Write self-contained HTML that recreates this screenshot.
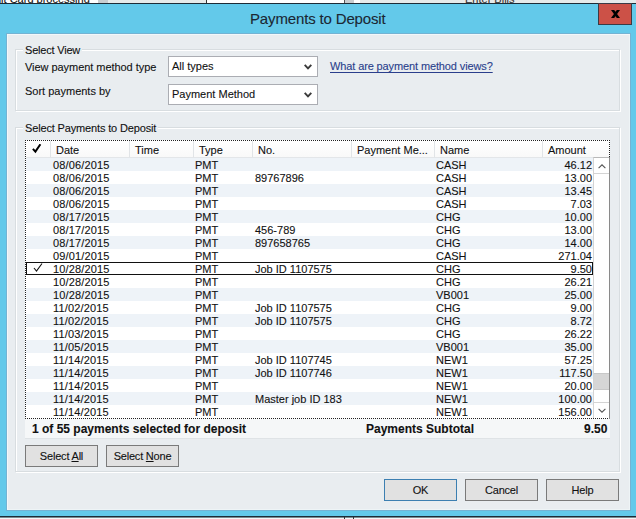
<!DOCTYPE html>
<html><head><meta charset="utf-8">
<style>
*{box-sizing:border-box;margin:0;padding:0}
html,body{width:636px;height:519px;overflow:hidden;-webkit-font-smoothing:antialiased;background:#63c9ea;font-family:"Liberation Sans",sans-serif;font-size:11px;color:#111;-webkit-text-stroke:0.1px currentColor}
.a{position:absolute;white-space:nowrap}
#top{left:0;top:0;width:636px;height:4px;background:#fff;overflow:hidden}
#topline{left:0;top:3px;width:636px;height:1px;background:#1d2b36}
#close{left:598px;top:3px;width:34px;height:22px;background:#cc5147;border:1px solid #3b3a44}
#title{left:250px;top:10px;font-size:15px;color:#1b2733;letter-spacing:-0.15px}
#client{left:6px;top:33px;width:625px;height:478px;background:#e9edf0;border:1px solid #74b3d3;box-shadow:inset 1px 1px 0 #f3f8fa,inset -1px -1px 0 #eef4f6}
#botline{left:0;top:516px;width:636px;height:1px;background:#1d2b36}
#bot{left:0;top:517px;width:636px;height:2px;background:#f4f6f6;border-top:1px solid #7a8a90}
.grp{border:1px solid #d8dde0;box-shadow:inset 1px 1px 0 #fff,1px 1px 0 #fff}
.lbl{background:#e9edf0;padding:0 2px}
.combo{background:#fff;border:1px solid #abadb3}
.chev{width:9px;height:6px}
.btn{background:#e1e1e1;border:1px solid #7a7a7a;text-align:center;line-height:21px;letter-spacing:-0.2px}
#grid{left:25px;top:140px;width:585px;height:279px;border:1px dotted #222;background:#fff;overflow:hidden}
.hdr{position:absolute;top:0;height:17px;line-height:14px;padding-top:2px;border-bottom:1px solid #e3e6e9;background:linear-gradient(#fff,#f9f9f9);border-right:1px solid #e1e4e7;padding-left:5px}
.row{position:absolute;left:0;width:567px;height:13px;line-height:13px}
.row.alt{background:#eef3f8}
.row span{position:absolute;top:1px}
.sel{position:absolute;left:0;top:0;width:567px;height:13px;border:1px solid #111}
#sb{position:absolute;left:567px;top:16px;width:17px;height:262px;background:#fff;border-left:1px solid #d4d4d4;border-top:1px solid #b8b8b8}
</style></head><body>
<div class="a" id="top">
  <div class="a" style="left:-5px;top:-7px;font-size:11px;color:#111">dit Card processing</div>
  <div class="a" style="left:98px;top:0;width:10px;height:3px;background:#c9cdd0"></div>
  <div class="a" style="left:108px;top:0;width:98px;height:3px;background:#e6eaea"></div>
  <div class="a" style="left:206px;top:0;width:1px;height:3px;background:#333"></div>
  <div class="a" style="left:344px;top:0;width:1px;height:3px;background:#555"></div>
  <div class="a" style="left:345px;top:0;width:9px;height:3px;background:#c9cdd0"></div>
  <div class="a" style="left:360px;top:0;width:276px;height:3px;background:#e6eaea"></div>
  <div class="a" style="left:465px;top:-7px;font-size:11px;color:#333">Enter Bills</div>
</div>
<div class="a" id="topline"></div>
<div class="a" id="close"><svg width="33" height="20" style="position:absolute;left:0;top:0"><path d="M12 6 L15.2 6 L21 14 L17.8 14 Z M17.8 6 L21 6 L15.2 14 L12 14 Z" fill="#000"/></svg></div>
<div class="a" id="title">Payments to Deposit</div>
<div class="a" id="client"></div>
<div class="a" id="botline"></div>
<div class="a" id="bot"></div>
<div class="a" style="left:344px;top:517px;width:1px;height:2px;background:#333"></div>
<div class="a" style="left:353px;top:517px;width:1px;height:2px;background:#333"></div>

<!-- group 1 -->
<div class="a grp" style="left:15px;top:49px;width:605px;height:62px"></div>
<div class="a lbl" style="left:23px;top:44px;letter-spacing:-0.2px">Select View</div>
<div class="a" style="left:25px;top:61px;letter-spacing:-0.05px">View payment method type</div>
<div class="a" style="left:25px;top:85px">Sort payments by</div>
<div class="a combo" style="left:168px;top:56px;width:150px;height:21px"></div>
<div class="a" style="left:172px;top:60px">All types</div>
<svg class="a" style="left:304px;top:64px" width="8" height="6" viewBox="0 0 8 6"><path d="M0.7 0.9 L4 4.4 L7.3 0.9" fill="none" stroke="#3a3a3a" stroke-width="1.9"/></svg>
<div class="a combo" style="left:168px;top:84px;width:150px;height:21px"></div>
<div class="a" style="left:172px;top:88px">Payment Method</div>
<svg class="a" style="left:304px;top:92px" width="8" height="6" viewBox="0 0 8 6"><path d="M0.7 0.9 L4 4.4 L7.3 0.9" fill="none" stroke="#3a3a3a" stroke-width="1.9"/></svg>
<div class="a" style="left:330px;top:60px;color:#2a3f8c;text-decoration:underline;text-underline-offset:2px;letter-spacing:-0.12px">What are payment method views?</div>

<!-- group 2 -->
<div class="a grp" style="left:15px;top:127px;width:605px;height:345px"></div>
<div class="a lbl" style="left:23px;top:122px;letter-spacing:-0.15px">Select Payments to Deposit</div>

<div class="a" id="grid">
  <div class="hdr" style="left:0;width:25px"></div>
  <svg class="a" style="left:6px;top:3px" width="10" height="10" viewBox="0 0 10 10"><path d="M0.9 4.9 L3.4 7.6 L8.4 0.3" fill="none" stroke="#000" stroke-width="2"/></svg>
  <div class="hdr" style="left:25px;width:79px">Date</div>
  <div class="hdr" style="left:104px;width:64px">Time</div>
  <div class="hdr" style="left:168px;width:59px">Type</div>
  <div class="hdr" style="left:227px;width:99px">No.</div>
  <div class="hdr" style="left:326px;width:83px">Payment Me...</div>
  <div class="hdr" style="left:409px;width:108px">Name</div>
  <div class="hdr" style="left:517px;width:68px;border-right:none">Amount</div>
  <div class="row alt" style="top:17px"><span style="left:27px;letter-spacing:0.15px">08/06/2015</span><span style="left:169px">PMT</span><span style="left:229px"></span><span style="left:410px">CASH</span><span style="right:1px">46.12</span></div>
<div class="row" style="top:30px"><span style="left:27px;letter-spacing:0.15px">08/06/2015</span><span style="left:169px">PMT</span><span style="left:229px">89767896</span><span style="left:410px">CASH</span><span style="right:1px">13.00</span></div>
<div class="row alt" style="top:43px"><span style="left:27px;letter-spacing:0.15px">08/06/2015</span><span style="left:169px">PMT</span><span style="left:229px"></span><span style="left:410px">CASH</span><span style="right:1px">13.45</span></div>
<div class="row" style="top:56px"><span style="left:27px;letter-spacing:0.15px">08/06/2015</span><span style="left:169px">PMT</span><span style="left:229px"></span><span style="left:410px">CASH</span><span style="right:1px">7.03</span></div>
<div class="row alt" style="top:69px"><span style="left:27px;letter-spacing:0.15px">08/17/2015</span><span style="left:169px">PMT</span><span style="left:229px"></span><span style="left:410px">CHG</span><span style="right:1px">10.00</span></div>
<div class="row" style="top:82px"><span style="left:27px;letter-spacing:0.15px">08/17/2015</span><span style="left:169px">PMT</span><span style="left:229px">456-789</span><span style="left:410px">CHG</span><span style="right:1px">13.00</span></div>
<div class="row alt" style="top:95px"><span style="left:27px;letter-spacing:0.15px">08/17/2015</span><span style="left:169px">PMT</span><span style="left:229px">897658765</span><span style="left:410px">CHG</span><span style="right:1px">14.00</span></div>
<div class="row" style="top:108px"><span style="left:27px;letter-spacing:0.15px">09/01/2015</span><span style="left:169px">PMT</span><span style="left:229px"></span><span style="left:410px">CASH</span><span style="right:1px">271.04</span></div>
<div class="row" style="top:121px"><div class="sel"></div><svg class="a" style="left:7px;top:1px" width="10" height="9" viewBox="0 0 10 9"><path d="M1 5 L3.5 8 L9 0.5" fill="none" stroke="#111" stroke-width="1.1"/></svg><span style="left:27px;letter-spacing:0.15px">10/28/2015</span><span style="left:169px">PMT</span><span style="left:229px">Job ID 1107575</span><span style="left:410px">CHG</span><span style="right:1px">9.50</span></div>
<div class="row" style="top:134px"><span style="left:27px;letter-spacing:0.15px">10/28/2015</span><span style="left:169px">PMT</span><span style="left:229px"></span><span style="left:410px">CHG</span><span style="right:1px">26.21</span></div>
<div class="row alt" style="top:147px"><span style="left:27px;letter-spacing:0.15px">10/28/2015</span><span style="left:169px">PMT</span><span style="left:229px"></span><span style="left:410px">VB001</span><span style="right:1px">25.00</span></div>
<div class="row" style="top:160px"><span style="left:27px;letter-spacing:0.15px">11/02/2015</span><span style="left:169px">PMT</span><span style="left:229px">Job ID 1107575</span><span style="left:410px">CHG</span><span style="right:1px">9.00</span></div>
<div class="row alt" style="top:173px"><span style="left:27px;letter-spacing:0.15px">11/02/2015</span><span style="left:169px">PMT</span><span style="left:229px">Job ID 1107575</span><span style="left:410px">CHG</span><span style="right:1px">8.72</span></div>
<div class="row" style="top:186px"><span style="left:27px;letter-spacing:0.15px">11/03/2015</span><span style="left:169px">PMT</span><span style="left:229px"></span><span style="left:410px">CHG</span><span style="right:1px">26.22</span></div>
<div class="row alt" style="top:199px"><span style="left:27px;letter-spacing:0.15px">11/05/2015</span><span style="left:169px">PMT</span><span style="left:229px"></span><span style="left:410px">VB001</span><span style="right:1px">35.00</span></div>
<div class="row" style="top:212px"><span style="left:27px;letter-spacing:0.15px">11/14/2015</span><span style="left:169px">PMT</span><span style="left:229px">Job ID 1107745</span><span style="left:410px">NEW1</span><span style="right:1px">57.25</span></div>
<div class="row alt" style="top:225px"><span style="left:27px;letter-spacing:0.15px">11/14/2015</span><span style="left:169px">PMT</span><span style="left:229px">Job ID 1107746</span><span style="left:410px">NEW1</span><span style="right:1px">117.50</span></div>
<div class="row" style="top:238px"><span style="left:27px;letter-spacing:0.15px">11/14/2015</span><span style="left:169px">PMT</span><span style="left:229px"></span><span style="left:410px">NEW1</span><span style="right:1px">20.00</span></div>
<div class="row alt" style="top:251px"><span style="left:27px;letter-spacing:0.15px">11/14/2015</span><span style="left:169px">PMT</span><span style="left:229px">Master job ID 183</span><span style="left:410px">NEW1</span><span style="right:1px">100.00</span></div>
<div class="row" style="top:264px"><span style="left:27px;letter-spacing:0.15px">11/14/2015</span><span style="left:169px">PMT</span><span style="left:229px"></span><span style="left:410px">NEW1</span><span style="right:1px">156.00</span></div>
  <div id="sb"><div class="a" style="left:0;top:0;width:16px;height:16px;border-bottom:1px solid #d4d4d4"></div><svg class="a" style="left:4px;top:6px" width="8" height="5" viewBox="0 0 8 5"><path d="M0.6 4.2 L4 0.8 L7.4 4.2" fill="none" stroke="#555" stroke-width="1.1"/></svg><div class="a" style="left:0;top:215px;width:16px;height:17px;background:#d6d6d6;border-top:1px solid #c8c8c8;border-bottom:1px solid #c8c8c8"></div><div class="a" style="left:0;top:244px;width:16px;height:17px;border-top:1px solid #d4d4d4"></div><svg class="a" style="left:4px;top:250px" width="8" height="5" viewBox="0 0 8 5"><path d="M0.6 0.8 L4 4.2 L7.4 0.8" fill="none" stroke="#555" stroke-width="1.1"/></svg></div>
</div>

<div class="a" style="left:609px;top:157px;width:1px;height:262px;background:#8a8a8a"></div>
<!-- footer -->
<div class="a" style="left:25px;top:419px;width:585px;height:20px;background:#f5f7f8;border-bottom:1px solid #dfe3e6"></div>
<div class="a" style="left:32px;top:422px;font-weight:bold;font-size:12px">1 of 55 payments selected for deposit</div>
<div class="a" style="left:366px;top:422px;font-weight:bold;font-size:12px">Payments Subtotal</div>
<div class="a" style="left:584px;top:422px;font-weight:bold;font-size:12px">9.50</div>

<div class="a btn" style="left:25px;top:445px;width:73px;height:22px">Select <u>A</u>ll</div>
<div class="a btn" style="left:106px;top:445px;width:73px;height:22px">Select <u>N</u>one</div>
<div class="a btn" style="left:384px;top:479px;width:73px;height:22px;border-color:#3c7fb1">OK</div>
<div class="a btn" style="left:465px;top:479px;width:73px;height:22px">Cancel</div>
<div class="a btn" style="left:546px;top:479px;width:73px;height:22px">Help</div>
</body></html>
